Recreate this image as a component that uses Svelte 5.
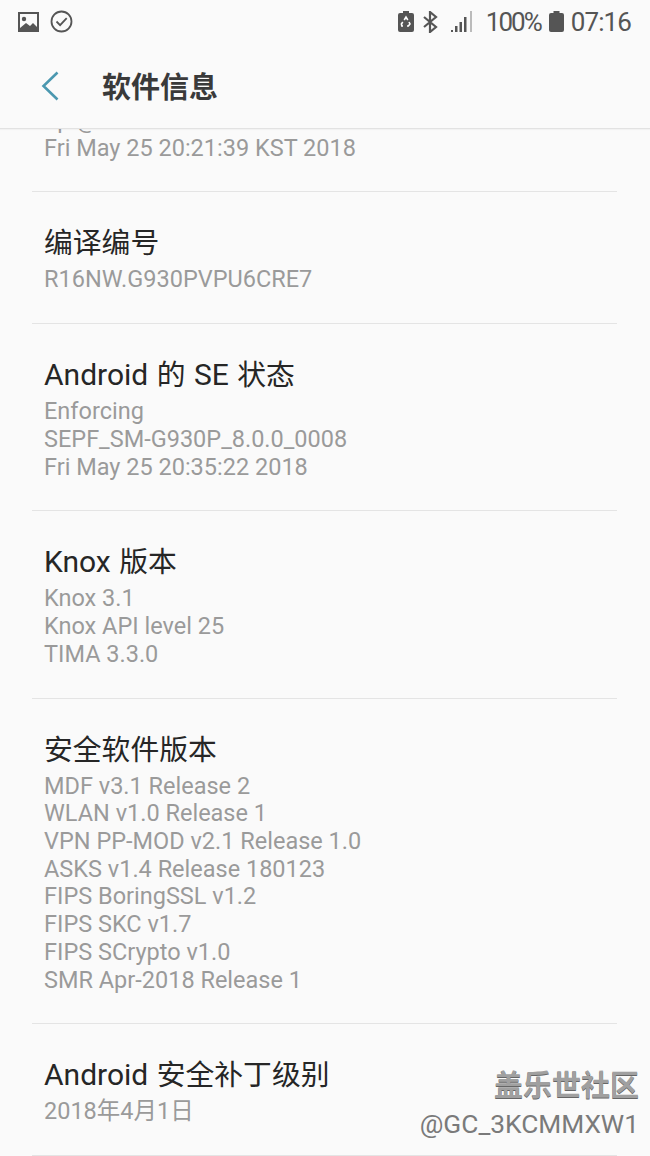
<script>
  const rows = [
    { title: '编译编号', lines: ['R16NW.G930PVPU6CRE7'] },
    { title: 'Android 的 SE 状态', lines: ['Enforcing', 'SEPF_SM-G930P_8.0.0_0008', 'Fri May 25 20:35:22 2018'] },
    { title: 'Knox 版本', lines: ['Knox 3.1', 'Knox API level 25', 'TIMA 3.3.0'] },
    { title: '安全软件版本', lines: ['MDF v3.1 Release 2', 'WLAN v1.0 Release 1', 'VPN PP-MOD v2.1 Release 1.0', 'ASKS v1.4 Release 180123', 'FIPS BoringSSL v1.2', 'FIPS SKC v1.7', 'FIPS SCrypto v1.0', 'SMR Apr-2018 Release 1'] },
    { title: 'Android 安全补丁级别', lines: ['2018年4月1日'] }
  ];
  const runs = (t) => t.split(/([A-Za-z ]+)/).filter(Boolean);
  const isLatin = (s) => /^[A-Za-z ]+$/.test(s);
</script>

<div class="screen">
  <div class="status">
    <div class="left">
      <svg width="22" height="20" viewBox="0 0 22 20"><path fill="#555" fill-rule="evenodd" d="M0 0h21v20H0z M2 2v14l6-5 4 3 3-3 4 4V2z"/><circle cx="6" cy="7" r="2.2" fill="#555"/></svg>
      <svg width="23" height="23" viewBox="0 0 23 23" fill="none" stroke="#555"><circle cx="11.5" cy="11.5" r="10" stroke-width="1.8"/><path d="M6.5 11.5l3.6 3.6 6.6-7" stroke-width="1.8"/></svg>
    </div>
    <div class="right">
      <svg width="16" height="21" viewBox="0 0 16 21"><path fill="#555" d="M5 0h6v2h3a2 2 0 0 1 2 2v15a2 2 0 0 1-2 2H2a2 2 0 0 1-2-2V4a2 2 0 0 1 2-2h3z"/><path fill="none" stroke="#fff" stroke-width="1.6" d="M6.2 9l1.800-3 1.800 3M11 11l1 2-1.600 2H9M5 15H3.800L3.400 13l1.400-2"/></svg>
      <svg class="bt" width="15" height="22" viewBox="0 0 15 22" fill="none" stroke="#555" stroke-width="2.200"><path d="M1 6l12 10-6 5V1l6 5L1 16"/></svg>
      <svg class="sig" width="22" height="21" viewBox="0 0 22 21"><path fill="#555" d="M0 19h2v2H0zM4 15h2.500v6H4zM8.500 11H11v10H8.500zM13 6h2.500v15H13z"/><path fill="#bbb" d="M19 0h2v21h-2z"/></svg>
      <span class="pct">100%</span>
      <svg class="bat" width="15" height="21" viewBox="0 0 15 21"><path fill="#555" d="M4.500 0h6v2H13a2 2 0 0 1 2 2v15a2 2 0 0 1-2 2H2a2 2 0 0 1-2-2V4a2 2 0 0 1 2-2h2.500z"/></svg>
      <span class="time">07:16</span>
    </div>
  </div>

  <header class="bar">
    <svg class="back" width="18" height="30" viewBox="0 0 18 30" fill="none" stroke="#4b98b0" stroke-width="2.600"><path d="M16.500 1.500L2.500 15l14 13.500"/></svg>
    <h1>软件信息</h1>
  </header>

  <div class="scroll">
    <div class="content">
      <section class="row first">
        <p>dpi@SWDG5808 #1</p>
        <p>Fri May 25 20:21:39 KST 2018</p>
      </section>
      {#each rows as row}
        <section class="row">
          <h2>{#each runs(row.title) as run}<span class:lat={isLatin(run)}>{run}</span>{/each}</h2>
          <div class="lines">
            {#each row.lines as line}
              <p>{line}</p>
            {/each}
          </div>
        </section>
      {/each}
    </div>
  </div>

  <div class="mark">
    <div class="mark-a">盖乐世社区</div>
    <div class="mark-b">@GC_3KCMMXW1</div>
  </div>
</div>

<style>
  :global(body) {
    margin: 0;
    background: #fafafa;
  }
  .screen {
    position: relative;
    width: 650px;
    height: 1156px;
    overflow: hidden;
    display: flex;
    flex-direction: column;
    background: #fafafa;
    font-family: Roboto, "Noto Sans CJK SC", sans-serif;
  }
  .status {
    height: 43px;
    flex: none;
    display: flex;
    justify-content: space-between;
    align-items: center;
    padding: 0 19px 0 18px;
    color: #555;
    font-size: 26px;
  }
  .left, .right {
    display: flex;
    align-items: center;
  }
  .left { gap: 10px; }
  .bt { margin-left: 9px; }
  .sig { margin-left: 13px; }
  .pct { margin-left: 13px; letter-spacing: -2px; }
  .bat { margin-left: 8px; }
  .time { margin-left: 7px; letter-spacing: -0.9px; }
  .bar {
    height: 86px;
    flex: none;
    display: flex;
    align-items: center;
    padding-left: 41px;
    box-sizing: border-box;
    border-bottom: 1px solid #e2e2e2;
    box-shadow: 0 1px 1px rgba(0, 0, 0, 0.03);
    position: relative;
  }
  .back { margin-right: 43px; }
  h1 {
    margin: 0 0 2px;
    font-size: 29px;
    font-weight: 700;
    color: #3a3a3a;
  }
  .scroll {
    flex: 1;
    overflow: hidden;
  }
  .content {
    margin-top: -29px;
  }
  .row {
    margin: 0 33px 0 32px;
    padding: 33px 0 29.1px 12px;
    border-bottom: 1px solid #e4e4e4;
  }
  .row.first {
    padding-top: 7px;
    padding-bottom: 29px;
  }
  h2 {
    margin: 0 0 5px;
    font-size: 28.8px;
    line-height: 36px;
    font-weight: 400;
    color: #262626;
  }
  .lat {
    font-size: 30px;
    word-spacing: 1px;
  }
  p {
    margin: 0;
    font-size: 23.5px;
    line-height: 27.7px;
    color: #9a9a9a;
    white-space: nowrap;
  }
  .mark {
    position: absolute;
    right: 11px;
    top: 1069px;
    text-align: right;
  }
  .mark-a {
    font-size: 29px;
    line-height: 34px;
    font-weight: 700;
    color: #a0a0a0;
    text-shadow: 0 1px 0 #666;
  }
  .mark-b {
    font-size: 26.3px;
    line-height: 36px;
    color: #7a7a7a;
    margin-top: 3px;
  }
</style>
